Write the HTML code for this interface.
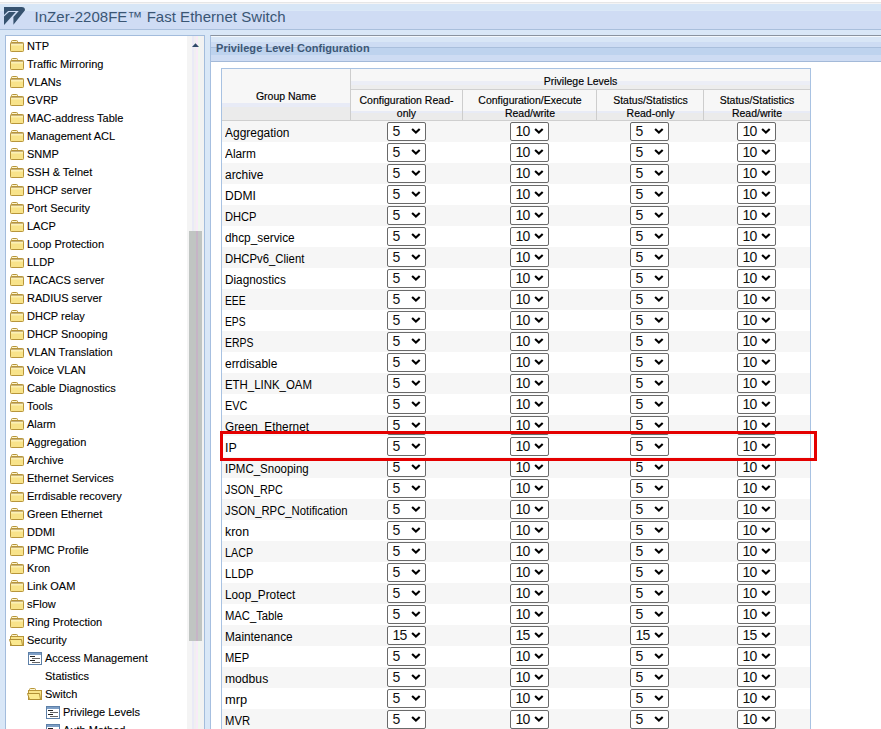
<!DOCTYPE html>
<html><head><meta charset="utf-8"><style>
*{margin:0;padding:0;box-sizing:border-box}
html,body{width:881px;height:729px;overflow:hidden;background:#d9e7f7;font-family:"Liberation Sans",sans-serif;position:relative}
.abs{position:absolute}
#topstrip{position:absolute;left:0;top:0;width:881px;height:4px;background:linear-gradient(#fefefe 0,#fefefe 2px,#e6e6e6 2px,#e6e6e6 3px,#f4f4f4 3px,#f4f4f4 4px)}
#titlebar{position:absolute;left:0;top:4px;width:881px;height:26px;background:linear-gradient(#d7e6f6 0,#d7e6f6 6px,#dae8f7 6px,#dae8f7 7px,#cfdcf4 7px,#cfdcf4 100%);border-bottom:1px solid #a9bfdc}
#title{position:absolute;left:34.5px;top:8px;letter-spacing:0.03px;font-size:15px;color:#3a5674;white-space:nowrap;line-height:18px}
#logo{position:absolute;left:0;top:0}
#side{position:absolute;left:5px;top:35px;width:200px;height:700px;background:#fff;border:1px solid #a3bcdc}
#sb{position:absolute;left:187px;top:36px;width:17px;height:700px;background:linear-gradient(90deg,#f4f4f4 0,#f4f4f4 5px,#eaeaf6 5px,#eaeaf6 7px,#f0f0f0 7px,#f0f0f0 9px,#f8eaf8 9px,#f8eaf8 11px,#eef8ee 11px,#eef8ee 13px,#f2f2f2 13px)}
#thumb{position:absolute;left:189px;top:231px;width:13px;height:410px;background:linear-gradient(90deg,#c0c5c2 0,#c0c5c2 7px,#c6b4c6 7px,#c6b4c6 9px,#c0c5c2 9px)}
.ico{position:absolute;line-height:0}
.si{position:absolute;font-size:11px;line-height:18px;height:18px;color:#000;-webkit-text-stroke:0.1px #000;white-space:nowrap}
#panel{position:absolute;left:210px;top:35px;width:700px;height:700px;background:#fff;border-left:1px solid #a6bfe0;border-top:1px solid #8a939f}
#phead{position:absolute;left:211px;top:36px;width:670px;height:26px;background:linear-gradient(#f3f8fd 0,#f3f8fd 1px,#d8e6f6 1px,#d8e6f6 6px,#cddcf3 6px,#cddcf3 11px,#a9bfdc 11px,#a9bfdc 12px,#bed3ee 12px,#bed3ee 19px,#cedcf3 19px,#cedcf3 25px);border-bottom:1px solid #a3b9d8}
#ptitle{position:absolute;left:216px;top:41px;letter-spacing:0.05px;font-size:11px;font-weight:bold;color:#3d5876;line-height:14px;white-space:nowrap}
#tbl{position:absolute;left:221px;top:68px;width:590px;height:700px;border:1px solid #a8c2e2;background:#fff}
.th{position:absolute;font-size:10.5px;color:#000;-webkit-text-stroke:0.15px #000;text-align:center;line-height:13px}
.hc{position:absolute}
.row{position:absolute;left:222px;width:588px;height:21px}
.nm{position:absolute;transform-origin:0 0;left:3px;top:0;font-size:12px;line-height:21px;padding-top:2px;color:#000;white-space:nowrap}
.sel{position:absolute;top:1px;width:39px;height:19px;border:1px solid #6a6a6a;border-radius:2px;background:#fff}
.sel span{position:absolute;left:4.5px;top:0;font-size:14px;line-height:17px;color:#111;letter-spacing:-0.7px}
.chev{position:absolute;left:23px;top:4px}
#red{position:absolute;left:220px;top:431px;width:597px;height:30px;border:3px solid #e40000}
</style></head><body>
<div id="topstrip"></div>
<div id="titlebar"></div>
<svg id="logo" width="30" height="30" viewBox="0 0 30 30"><path d="M4,7 L21.7,7 Q25,7 25,10.3 L13.4,24.8 L13.4,16.9 L18.8,10.9 L8.1,10.9 L4,15 Z" fill="#36526f"/><path d="M4,16.4 L9,12.1 L15.8,12.1 L4.3,24.8 L4,24.8 Z" fill="#36526f"/></svg>
<div id="title">InZer-2208FE™ Fast Ethernet Switch</div>
<div id="side"></div>
<div class="ico" style="left:10px;top:40px"><svg class="ic" width="15" height="13" viewBox="0 0 15 13"><path d="M1.5,2.5 L1.5,1.5 Q1.5,0.5 2.5,0.5 L6.5,0.5 Q7.5,0.5 7.5,1.5 L7.5,2.5" fill="#fdf6d0" stroke="#b8963a" stroke-width="1"/><rect x="0.5" y="2.5" width="13" height="9" rx="0.8" fill="#f8e38a" stroke="#b8963a" stroke-width="1"/><rect x="1" y="3" width="12" height="1" fill="#c8b27e"/><rect x="1" y="4" width="12" height="1.5" fill="#fcf1b5"/></svg></div><div class="si" style="left:27px;top:37px">NTP</div>
<div class="ico" style="left:10px;top:58px"><svg class="ic" width="15" height="13" viewBox="0 0 15 13"><path d="M1.5,2.5 L1.5,1.5 Q1.5,0.5 2.5,0.5 L6.5,0.5 Q7.5,0.5 7.5,1.5 L7.5,2.5" fill="#fdf6d0" stroke="#b8963a" stroke-width="1"/><rect x="0.5" y="2.5" width="13" height="9" rx="0.8" fill="#f8e38a" stroke="#b8963a" stroke-width="1"/><rect x="1" y="3" width="12" height="1" fill="#c8b27e"/><rect x="1" y="4" width="12" height="1.5" fill="#fcf1b5"/></svg></div><div class="si" style="left:27px;top:55px">Traffic Mirroring</div>
<div class="ico" style="left:10px;top:76px"><svg class="ic" width="15" height="13" viewBox="0 0 15 13"><path d="M1.5,2.5 L1.5,1.5 Q1.5,0.5 2.5,0.5 L6.5,0.5 Q7.5,0.5 7.5,1.5 L7.5,2.5" fill="#fdf6d0" stroke="#b8963a" stroke-width="1"/><rect x="0.5" y="2.5" width="13" height="9" rx="0.8" fill="#f8e38a" stroke="#b8963a" stroke-width="1"/><rect x="1" y="3" width="12" height="1" fill="#c8b27e"/><rect x="1" y="4" width="12" height="1.5" fill="#fcf1b5"/></svg></div><div class="si" style="left:27px;top:73px">VLANs</div>
<div class="ico" style="left:10px;top:94px"><svg class="ic" width="15" height="13" viewBox="0 0 15 13"><path d="M1.5,2.5 L1.5,1.5 Q1.5,0.5 2.5,0.5 L6.5,0.5 Q7.5,0.5 7.5,1.5 L7.5,2.5" fill="#fdf6d0" stroke="#b8963a" stroke-width="1"/><rect x="0.5" y="2.5" width="13" height="9" rx="0.8" fill="#f8e38a" stroke="#b8963a" stroke-width="1"/><rect x="1" y="3" width="12" height="1" fill="#c8b27e"/><rect x="1" y="4" width="12" height="1.5" fill="#fcf1b5"/></svg></div><div class="si" style="left:27px;top:91px">GVRP</div>
<div class="ico" style="left:10px;top:112px"><svg class="ic" width="15" height="13" viewBox="0 0 15 13"><path d="M1.5,2.5 L1.5,1.5 Q1.5,0.5 2.5,0.5 L6.5,0.5 Q7.5,0.5 7.5,1.5 L7.5,2.5" fill="#fdf6d0" stroke="#b8963a" stroke-width="1"/><rect x="0.5" y="2.5" width="13" height="9" rx="0.8" fill="#f8e38a" stroke="#b8963a" stroke-width="1"/><rect x="1" y="3" width="12" height="1" fill="#c8b27e"/><rect x="1" y="4" width="12" height="1.5" fill="#fcf1b5"/></svg></div><div class="si" style="left:27px;top:109px">MAC-address Table</div>
<div class="ico" style="left:10px;top:130px"><svg class="ic" width="15" height="13" viewBox="0 0 15 13"><path d="M1.5,2.5 L1.5,1.5 Q1.5,0.5 2.5,0.5 L6.5,0.5 Q7.5,0.5 7.5,1.5 L7.5,2.5" fill="#fdf6d0" stroke="#b8963a" stroke-width="1"/><rect x="0.5" y="2.5" width="13" height="9" rx="0.8" fill="#f8e38a" stroke="#b8963a" stroke-width="1"/><rect x="1" y="3" width="12" height="1" fill="#c8b27e"/><rect x="1" y="4" width="12" height="1.5" fill="#fcf1b5"/></svg></div><div class="si" style="left:27px;top:127px">Management ACL</div>
<div class="ico" style="left:10px;top:148px"><svg class="ic" width="15" height="13" viewBox="0 0 15 13"><path d="M1.5,2.5 L1.5,1.5 Q1.5,0.5 2.5,0.5 L6.5,0.5 Q7.5,0.5 7.5,1.5 L7.5,2.5" fill="#fdf6d0" stroke="#b8963a" stroke-width="1"/><rect x="0.5" y="2.5" width="13" height="9" rx="0.8" fill="#f8e38a" stroke="#b8963a" stroke-width="1"/><rect x="1" y="3" width="12" height="1" fill="#c8b27e"/><rect x="1" y="4" width="12" height="1.5" fill="#fcf1b5"/></svg></div><div class="si" style="left:27px;top:145px">SNMP</div>
<div class="ico" style="left:10px;top:166px"><svg class="ic" width="15" height="13" viewBox="0 0 15 13"><path d="M1.5,2.5 L1.5,1.5 Q1.5,0.5 2.5,0.5 L6.5,0.5 Q7.5,0.5 7.5,1.5 L7.5,2.5" fill="#fdf6d0" stroke="#b8963a" stroke-width="1"/><rect x="0.5" y="2.5" width="13" height="9" rx="0.8" fill="#f8e38a" stroke="#b8963a" stroke-width="1"/><rect x="1" y="3" width="12" height="1" fill="#c8b27e"/><rect x="1" y="4" width="12" height="1.5" fill="#fcf1b5"/></svg></div><div class="si" style="left:27px;top:163px">SSH &amp; Telnet</div>
<div class="ico" style="left:10px;top:184px"><svg class="ic" width="15" height="13" viewBox="0 0 15 13"><path d="M1.5,2.5 L1.5,1.5 Q1.5,0.5 2.5,0.5 L6.5,0.5 Q7.5,0.5 7.5,1.5 L7.5,2.5" fill="#fdf6d0" stroke="#b8963a" stroke-width="1"/><rect x="0.5" y="2.5" width="13" height="9" rx="0.8" fill="#f8e38a" stroke="#b8963a" stroke-width="1"/><rect x="1" y="3" width="12" height="1" fill="#c8b27e"/><rect x="1" y="4" width="12" height="1.5" fill="#fcf1b5"/></svg></div><div class="si" style="left:27px;top:181px">DHCP server</div>
<div class="ico" style="left:10px;top:202px"><svg class="ic" width="15" height="13" viewBox="0 0 15 13"><path d="M1.5,2.5 L1.5,1.5 Q1.5,0.5 2.5,0.5 L6.5,0.5 Q7.5,0.5 7.5,1.5 L7.5,2.5" fill="#fdf6d0" stroke="#b8963a" stroke-width="1"/><rect x="0.5" y="2.5" width="13" height="9" rx="0.8" fill="#f8e38a" stroke="#b8963a" stroke-width="1"/><rect x="1" y="3" width="12" height="1" fill="#c8b27e"/><rect x="1" y="4" width="12" height="1.5" fill="#fcf1b5"/></svg></div><div class="si" style="left:27px;top:199px">Port Security</div>
<div class="ico" style="left:10px;top:220px"><svg class="ic" width="15" height="13" viewBox="0 0 15 13"><path d="M1.5,2.5 L1.5,1.5 Q1.5,0.5 2.5,0.5 L6.5,0.5 Q7.5,0.5 7.5,1.5 L7.5,2.5" fill="#fdf6d0" stroke="#b8963a" stroke-width="1"/><rect x="0.5" y="2.5" width="13" height="9" rx="0.8" fill="#f8e38a" stroke="#b8963a" stroke-width="1"/><rect x="1" y="3" width="12" height="1" fill="#c8b27e"/><rect x="1" y="4" width="12" height="1.5" fill="#fcf1b5"/></svg></div><div class="si" style="left:27px;top:217px">LACP</div>
<div class="ico" style="left:10px;top:238px"><svg class="ic" width="15" height="13" viewBox="0 0 15 13"><path d="M1.5,2.5 L1.5,1.5 Q1.5,0.5 2.5,0.5 L6.5,0.5 Q7.5,0.5 7.5,1.5 L7.5,2.5" fill="#fdf6d0" stroke="#b8963a" stroke-width="1"/><rect x="0.5" y="2.5" width="13" height="9" rx="0.8" fill="#f8e38a" stroke="#b8963a" stroke-width="1"/><rect x="1" y="3" width="12" height="1" fill="#c8b27e"/><rect x="1" y="4" width="12" height="1.5" fill="#fcf1b5"/></svg></div><div class="si" style="left:27px;top:235px">Loop Protection</div>
<div class="ico" style="left:10px;top:256px"><svg class="ic" width="15" height="13" viewBox="0 0 15 13"><path d="M1.5,2.5 L1.5,1.5 Q1.5,0.5 2.5,0.5 L6.5,0.5 Q7.5,0.5 7.5,1.5 L7.5,2.5" fill="#fdf6d0" stroke="#b8963a" stroke-width="1"/><rect x="0.5" y="2.5" width="13" height="9" rx="0.8" fill="#f8e38a" stroke="#b8963a" stroke-width="1"/><rect x="1" y="3" width="12" height="1" fill="#c8b27e"/><rect x="1" y="4" width="12" height="1.5" fill="#fcf1b5"/></svg></div><div class="si" style="left:27px;top:253px">LLDP</div>
<div class="ico" style="left:10px;top:274px"><svg class="ic" width="15" height="13" viewBox="0 0 15 13"><path d="M1.5,2.5 L1.5,1.5 Q1.5,0.5 2.5,0.5 L6.5,0.5 Q7.5,0.5 7.5,1.5 L7.5,2.5" fill="#fdf6d0" stroke="#b8963a" stroke-width="1"/><rect x="0.5" y="2.5" width="13" height="9" rx="0.8" fill="#f8e38a" stroke="#b8963a" stroke-width="1"/><rect x="1" y="3" width="12" height="1" fill="#c8b27e"/><rect x="1" y="4" width="12" height="1.5" fill="#fcf1b5"/></svg></div><div class="si" style="left:27px;top:271px">TACACS server</div>
<div class="ico" style="left:10px;top:292px"><svg class="ic" width="15" height="13" viewBox="0 0 15 13"><path d="M1.5,2.5 L1.5,1.5 Q1.5,0.5 2.5,0.5 L6.5,0.5 Q7.5,0.5 7.5,1.5 L7.5,2.5" fill="#fdf6d0" stroke="#b8963a" stroke-width="1"/><rect x="0.5" y="2.5" width="13" height="9" rx="0.8" fill="#f8e38a" stroke="#b8963a" stroke-width="1"/><rect x="1" y="3" width="12" height="1" fill="#c8b27e"/><rect x="1" y="4" width="12" height="1.5" fill="#fcf1b5"/></svg></div><div class="si" style="left:27px;top:289px">RADIUS server</div>
<div class="ico" style="left:10px;top:310px"><svg class="ic" width="15" height="13" viewBox="0 0 15 13"><path d="M1.5,2.5 L1.5,1.5 Q1.5,0.5 2.5,0.5 L6.5,0.5 Q7.5,0.5 7.5,1.5 L7.5,2.5" fill="#fdf6d0" stroke="#b8963a" stroke-width="1"/><rect x="0.5" y="2.5" width="13" height="9" rx="0.8" fill="#f8e38a" stroke="#b8963a" stroke-width="1"/><rect x="1" y="3" width="12" height="1" fill="#c8b27e"/><rect x="1" y="4" width="12" height="1.5" fill="#fcf1b5"/></svg></div><div class="si" style="left:27px;top:307px">DHCP relay</div>
<div class="ico" style="left:10px;top:328px"><svg class="ic" width="15" height="13" viewBox="0 0 15 13"><path d="M1.5,2.5 L1.5,1.5 Q1.5,0.5 2.5,0.5 L6.5,0.5 Q7.5,0.5 7.5,1.5 L7.5,2.5" fill="#fdf6d0" stroke="#b8963a" stroke-width="1"/><rect x="0.5" y="2.5" width="13" height="9" rx="0.8" fill="#f8e38a" stroke="#b8963a" stroke-width="1"/><rect x="1" y="3" width="12" height="1" fill="#c8b27e"/><rect x="1" y="4" width="12" height="1.5" fill="#fcf1b5"/></svg></div><div class="si" style="left:27px;top:325px">DHCP Snooping</div>
<div class="ico" style="left:10px;top:346px"><svg class="ic" width="15" height="13" viewBox="0 0 15 13"><path d="M1.5,2.5 L1.5,1.5 Q1.5,0.5 2.5,0.5 L6.5,0.5 Q7.5,0.5 7.5,1.5 L7.5,2.5" fill="#fdf6d0" stroke="#b8963a" stroke-width="1"/><rect x="0.5" y="2.5" width="13" height="9" rx="0.8" fill="#f8e38a" stroke="#b8963a" stroke-width="1"/><rect x="1" y="3" width="12" height="1" fill="#c8b27e"/><rect x="1" y="4" width="12" height="1.5" fill="#fcf1b5"/></svg></div><div class="si" style="left:27px;top:343px">VLAN Translation</div>
<div class="ico" style="left:10px;top:364px"><svg class="ic" width="15" height="13" viewBox="0 0 15 13"><path d="M1.5,2.5 L1.5,1.5 Q1.5,0.5 2.5,0.5 L6.5,0.5 Q7.5,0.5 7.5,1.5 L7.5,2.5" fill="#fdf6d0" stroke="#b8963a" stroke-width="1"/><rect x="0.5" y="2.5" width="13" height="9" rx="0.8" fill="#f8e38a" stroke="#b8963a" stroke-width="1"/><rect x="1" y="3" width="12" height="1" fill="#c8b27e"/><rect x="1" y="4" width="12" height="1.5" fill="#fcf1b5"/></svg></div><div class="si" style="left:27px;top:361px">Voice VLAN</div>
<div class="ico" style="left:10px;top:382px"><svg class="ic" width="15" height="13" viewBox="0 0 15 13"><path d="M1.5,2.5 L1.5,1.5 Q1.5,0.5 2.5,0.5 L6.5,0.5 Q7.5,0.5 7.5,1.5 L7.5,2.5" fill="#fdf6d0" stroke="#b8963a" stroke-width="1"/><rect x="0.5" y="2.5" width="13" height="9" rx="0.8" fill="#f8e38a" stroke="#b8963a" stroke-width="1"/><rect x="1" y="3" width="12" height="1" fill="#c8b27e"/><rect x="1" y="4" width="12" height="1.5" fill="#fcf1b5"/></svg></div><div class="si" style="left:27px;top:379px">Cable Diagnostics</div>
<div class="ico" style="left:10px;top:400px"><svg class="ic" width="15" height="13" viewBox="0 0 15 13"><path d="M1.5,2.5 L1.5,1.5 Q1.5,0.5 2.5,0.5 L6.5,0.5 Q7.5,0.5 7.5,1.5 L7.5,2.5" fill="#fdf6d0" stroke="#b8963a" stroke-width="1"/><rect x="0.5" y="2.5" width="13" height="9" rx="0.8" fill="#f8e38a" stroke="#b8963a" stroke-width="1"/><rect x="1" y="3" width="12" height="1" fill="#c8b27e"/><rect x="1" y="4" width="12" height="1.5" fill="#fcf1b5"/></svg></div><div class="si" style="left:27px;top:397px">Tools</div>
<div class="ico" style="left:10px;top:418px"><svg class="ic" width="15" height="13" viewBox="0 0 15 13"><path d="M1.5,2.5 L1.5,1.5 Q1.5,0.5 2.5,0.5 L6.5,0.5 Q7.5,0.5 7.5,1.5 L7.5,2.5" fill="#fdf6d0" stroke="#b8963a" stroke-width="1"/><rect x="0.5" y="2.5" width="13" height="9" rx="0.8" fill="#f8e38a" stroke="#b8963a" stroke-width="1"/><rect x="1" y="3" width="12" height="1" fill="#c8b27e"/><rect x="1" y="4" width="12" height="1.5" fill="#fcf1b5"/></svg></div><div class="si" style="left:27px;top:415px">Alarm</div>
<div class="ico" style="left:10px;top:436px"><svg class="ic" width="15" height="13" viewBox="0 0 15 13"><path d="M1.5,2.5 L1.5,1.5 Q1.5,0.5 2.5,0.5 L6.5,0.5 Q7.5,0.5 7.5,1.5 L7.5,2.5" fill="#fdf6d0" stroke="#b8963a" stroke-width="1"/><rect x="0.5" y="2.5" width="13" height="9" rx="0.8" fill="#f8e38a" stroke="#b8963a" stroke-width="1"/><rect x="1" y="3" width="12" height="1" fill="#c8b27e"/><rect x="1" y="4" width="12" height="1.5" fill="#fcf1b5"/></svg></div><div class="si" style="left:27px;top:433px">Aggregation</div>
<div class="ico" style="left:10px;top:454px"><svg class="ic" width="15" height="13" viewBox="0 0 15 13"><path d="M1.5,2.5 L1.5,1.5 Q1.5,0.5 2.5,0.5 L6.5,0.5 Q7.5,0.5 7.5,1.5 L7.5,2.5" fill="#fdf6d0" stroke="#b8963a" stroke-width="1"/><rect x="0.5" y="2.5" width="13" height="9" rx="0.8" fill="#f8e38a" stroke="#b8963a" stroke-width="1"/><rect x="1" y="3" width="12" height="1" fill="#c8b27e"/><rect x="1" y="4" width="12" height="1.5" fill="#fcf1b5"/></svg></div><div class="si" style="left:27px;top:451px">Archive</div>
<div class="ico" style="left:10px;top:472px"><svg class="ic" width="15" height="13" viewBox="0 0 15 13"><path d="M1.5,2.5 L1.5,1.5 Q1.5,0.5 2.5,0.5 L6.5,0.5 Q7.5,0.5 7.5,1.5 L7.5,2.5" fill="#fdf6d0" stroke="#b8963a" stroke-width="1"/><rect x="0.5" y="2.5" width="13" height="9" rx="0.8" fill="#f8e38a" stroke="#b8963a" stroke-width="1"/><rect x="1" y="3" width="12" height="1" fill="#c8b27e"/><rect x="1" y="4" width="12" height="1.5" fill="#fcf1b5"/></svg></div><div class="si" style="left:27px;top:469px">Ethernet Services</div>
<div class="ico" style="left:10px;top:490px"><svg class="ic" width="15" height="13" viewBox="0 0 15 13"><path d="M1.5,2.5 L1.5,1.5 Q1.5,0.5 2.5,0.5 L6.5,0.5 Q7.5,0.5 7.5,1.5 L7.5,2.5" fill="#fdf6d0" stroke="#b8963a" stroke-width="1"/><rect x="0.5" y="2.5" width="13" height="9" rx="0.8" fill="#f8e38a" stroke="#b8963a" stroke-width="1"/><rect x="1" y="3" width="12" height="1" fill="#c8b27e"/><rect x="1" y="4" width="12" height="1.5" fill="#fcf1b5"/></svg></div><div class="si" style="left:27px;top:487px">Errdisable recovery</div>
<div class="ico" style="left:10px;top:508px"><svg class="ic" width="15" height="13" viewBox="0 0 15 13"><path d="M1.5,2.5 L1.5,1.5 Q1.5,0.5 2.5,0.5 L6.5,0.5 Q7.5,0.5 7.5,1.5 L7.5,2.5" fill="#fdf6d0" stroke="#b8963a" stroke-width="1"/><rect x="0.5" y="2.5" width="13" height="9" rx="0.8" fill="#f8e38a" stroke="#b8963a" stroke-width="1"/><rect x="1" y="3" width="12" height="1" fill="#c8b27e"/><rect x="1" y="4" width="12" height="1.5" fill="#fcf1b5"/></svg></div><div class="si" style="left:27px;top:505px">Green Ethernet</div>
<div class="ico" style="left:10px;top:526px"><svg class="ic" width="15" height="13" viewBox="0 0 15 13"><path d="M1.5,2.5 L1.5,1.5 Q1.5,0.5 2.5,0.5 L6.5,0.5 Q7.5,0.5 7.5,1.5 L7.5,2.5" fill="#fdf6d0" stroke="#b8963a" stroke-width="1"/><rect x="0.5" y="2.5" width="13" height="9" rx="0.8" fill="#f8e38a" stroke="#b8963a" stroke-width="1"/><rect x="1" y="3" width="12" height="1" fill="#c8b27e"/><rect x="1" y="4" width="12" height="1.5" fill="#fcf1b5"/></svg></div><div class="si" style="left:27px;top:523px">DDMI</div>
<div class="ico" style="left:10px;top:544px"><svg class="ic" width="15" height="13" viewBox="0 0 15 13"><path d="M1.5,2.5 L1.5,1.5 Q1.5,0.5 2.5,0.5 L6.5,0.5 Q7.5,0.5 7.5,1.5 L7.5,2.5" fill="#fdf6d0" stroke="#b8963a" stroke-width="1"/><rect x="0.5" y="2.5" width="13" height="9" rx="0.8" fill="#f8e38a" stroke="#b8963a" stroke-width="1"/><rect x="1" y="3" width="12" height="1" fill="#c8b27e"/><rect x="1" y="4" width="12" height="1.5" fill="#fcf1b5"/></svg></div><div class="si" style="left:27px;top:541px">IPMC Profile</div>
<div class="ico" style="left:10px;top:562px"><svg class="ic" width="15" height="13" viewBox="0 0 15 13"><path d="M1.5,2.5 L1.5,1.5 Q1.5,0.5 2.5,0.5 L6.5,0.5 Q7.5,0.5 7.5,1.5 L7.5,2.5" fill="#fdf6d0" stroke="#b8963a" stroke-width="1"/><rect x="0.5" y="2.5" width="13" height="9" rx="0.8" fill="#f8e38a" stroke="#b8963a" stroke-width="1"/><rect x="1" y="3" width="12" height="1" fill="#c8b27e"/><rect x="1" y="4" width="12" height="1.5" fill="#fcf1b5"/></svg></div><div class="si" style="left:27px;top:559px">Kron</div>
<div class="ico" style="left:10px;top:580px"><svg class="ic" width="15" height="13" viewBox="0 0 15 13"><path d="M1.5,2.5 L1.5,1.5 Q1.5,0.5 2.5,0.5 L6.5,0.5 Q7.5,0.5 7.5,1.5 L7.5,2.5" fill="#fdf6d0" stroke="#b8963a" stroke-width="1"/><rect x="0.5" y="2.5" width="13" height="9" rx="0.8" fill="#f8e38a" stroke="#b8963a" stroke-width="1"/><rect x="1" y="3" width="12" height="1" fill="#c8b27e"/><rect x="1" y="4" width="12" height="1.5" fill="#fcf1b5"/></svg></div><div class="si" style="left:27px;top:577px">Link OAM</div>
<div class="ico" style="left:10px;top:598px"><svg class="ic" width="15" height="13" viewBox="0 0 15 13"><path d="M1.5,2.5 L1.5,1.5 Q1.5,0.5 2.5,0.5 L6.5,0.5 Q7.5,0.5 7.5,1.5 L7.5,2.5" fill="#fdf6d0" stroke="#b8963a" stroke-width="1"/><rect x="0.5" y="2.5" width="13" height="9" rx="0.8" fill="#f8e38a" stroke="#b8963a" stroke-width="1"/><rect x="1" y="3" width="12" height="1" fill="#c8b27e"/><rect x="1" y="4" width="12" height="1.5" fill="#fcf1b5"/></svg></div><div class="si" style="left:27px;top:595px">sFlow</div>
<div class="ico" style="left:10px;top:616px"><svg class="ic" width="15" height="13" viewBox="0 0 15 13"><path d="M1.5,2.5 L1.5,1.5 Q1.5,0.5 2.5,0.5 L6.5,0.5 Q7.5,0.5 7.5,1.5 L7.5,2.5" fill="#fdf6d0" stroke="#b8963a" stroke-width="1"/><rect x="0.5" y="2.5" width="13" height="9" rx="0.8" fill="#f8e38a" stroke="#b8963a" stroke-width="1"/><rect x="1" y="3" width="12" height="1" fill="#c8b27e"/><rect x="1" y="4" width="12" height="1.5" fill="#fcf1b5"/></svg></div><div class="si" style="left:27px;top:613px">Ring Protection</div>
<div class="ico" style="left:9px;top:634px"><svg class="ic" width="17" height="14" viewBox="0 0 17 14"><path d="M2.5,2.5 V1.5 Q2.5,0.5 3.5,0.5 H7.5 Q8.5,0.5 8.5,1.5 V2.5" fill="#fdf6d0" stroke="#b8963a" stroke-width="1"/><rect x="1.5" y="2.5" width="13" height="9" fill="#f8e38a" stroke="#b8963a" stroke-width="1"/><path d="M0.5,5.5 H12.5 L13.5,11.5 H2.5 Z" fill="#fbe98f" stroke="#b08f35" stroke-width="1"/></svg></div><div class="si" style="left:27px;top:631px">Security</div>
<div class="ico" style="left:28px;top:652px"><svg class="ic" width="14" height="13" viewBox="0 0 14 13"><rect x="0.5" y="0.5" width="13" height="12" fill="#fff" stroke="#5d80a8"/><rect x="1" y="1" width="12" height="2" fill="#7e9fc6"/><path d="M2,4.5 H7 M2,8.5 H7" stroke="#222" stroke-width="1"/><path d="M4,6.5 H12 M4,10.5 H12" stroke="#666" stroke-width="1"/></svg></div><div class="si" style="left:45px;top:649px">Access Management</div>
<div class="si" style="left:45px;top:667px">Statistics</div>
<div class="ico" style="left:27px;top:688px"><svg class="ic" width="17" height="14" viewBox="0 0 17 14"><path d="M2.5,2.5 V1.5 Q2.5,0.5 3.5,0.5 H7.5 Q8.5,0.5 8.5,1.5 V2.5" fill="#fdf6d0" stroke="#b8963a" stroke-width="1"/><rect x="1.5" y="2.5" width="13" height="9" fill="#f8e38a" stroke="#b8963a" stroke-width="1"/><path d="M0.5,5.5 H12.5 L13.5,11.5 H2.5 Z" fill="#fbe98f" stroke="#b08f35" stroke-width="1"/></svg></div><div class="si" style="left:45px;top:685px">Switch</div>
<div class="ico" style="left:46px;top:706px"><svg class="ic" width="14" height="13" viewBox="0 0 14 13"><rect x="0.5" y="0.5" width="13" height="12" fill="#fff" stroke="#5d80a8"/><rect x="1" y="1" width="12" height="2" fill="#7e9fc6"/><path d="M2,4.5 H7 M2,8.5 H7" stroke="#222" stroke-width="1"/><path d="M4,6.5 H12 M4,10.5 H12" stroke="#666" stroke-width="1"/></svg></div><div class="si" style="left:63px;top:703px">Privilege Levels</div>
<div class="ico" style="left:46px;top:724px"><svg class="ic" width="14" height="13" viewBox="0 0 14 13"><rect x="0.5" y="0.5" width="13" height="12" fill="#fff" stroke="#5d80a8"/><rect x="1" y="1" width="12" height="2" fill="#7e9fc6"/><path d="M2,4.5 H7 M2,8.5 H7" stroke="#222" stroke-width="1"/><path d="M4,6.5 H12 M4,10.5 H12" stroke="#666" stroke-width="1"/></svg></div><div class="si" style="left:63px;top:721px">Auth Method</div>
<div id="sb"></div>
<div id="thumb"></div>
<svg class="abs" style="left:191px;top:42px" width="10" height="6" viewBox="0 0 10 6"><path d="M1,5 L4.5,1.2 L8,5 Z" fill="#2f4a68"/></svg>
<div id="panel"></div>
<div id="phead"></div>
<div id="ptitle">Privilege Level Configuration</div>
<div id="tbl"></div>
<div class="hc" style="left:222px;top:69px;width:128px;height:51px;background:linear-gradient(#f7f7f7 0,#f7f7f7 34px,#e8ebf6 34px,#e8ebf6 38px,#ebebeb 38px,#ebebeb 51px)"></div>
<div class="hc" style="left:351px;top:69px;width:459px;height:20px;background:linear-gradient(#f7f7f7 0,#f7f7f7 12px,#eceef6 12px,#eceef6 16px,#ededed 16px,#ededed 20px)"></div>
<div class="hc" style="left:351px;top:89px;width:459px;height:1px;background:#d0d0d0"></div>
<div class="hc" style="left:222px;top:120px;width:588px;height:1px;background:#cfcfcf"></div>
<div class="hc" style="left:350px;top:69px;width:1px;height:51px;background:#cdcdcd"></div>
<div class="hc" style="left:351px;top:90px;width:459px;height:30px;background:linear-gradient(#f7f7f7 0,#f7f7f7 21px,#e8ebf6 21px,#e8ebf6 23px,#ebebeb 23px,#ebebeb 30px)"></div>
<div class="hc" style="left:462px;top:90px;width:1px;height:30px;background:#cdcdcd"></div>
<div class="hc" style="left:596px;top:90px;width:1px;height:30px;background:#cdcdcd"></div>
<div class="hc" style="left:703px;top:90px;width:1px;height:30px;background:#cdcdcd"></div>
<div class="th" style="left:222px;top:90px;width:128px">Group Name</div>
<div class="th" style="left:351px;top:75px;width:459px">Privilege Levels</div>
<div class="th" style="left:351px;top:94px;width:111px">Configuration Read-<br>only</div>
<div class="th" style="left:463px;top:94px;width:134px">Configuration/Execute<br>Read/write</div>
<div class="th" style="left:598px;top:94px;width:105px">Status/Statistics<br>Read-only</div>
<div class="th" style="left:704px;top:94px;width:106px">Status/Statistics<br>Read/write</div>
<div class="row" style="top:121px;background:#f6f6f6"><div class="nm" style="transform:scaleX(0.9969)">Aggregation</div><div class="sel" style="left:165px"><span>5</span><svg class="chev" width="10" height="8" viewBox="0 0 10 8"><path d="M1.1,2 L4.9,5.6 L8.7,2" fill="none" stroke="#000" stroke-width="2.1"/></svg></div><div class="sel" style="left:288px"><span>10</span><svg class="chev" width="10" height="8" viewBox="0 0 10 8"><path d="M1.1,2 L4.9,5.6 L8.7,2" fill="none" stroke="#000" stroke-width="2.1"/></svg></div><div class="sel" style="left:408px"><span>5</span><svg class="chev" width="10" height="8" viewBox="0 0 10 8"><path d="M1.1,2 L4.9,5.6 L8.7,2" fill="none" stroke="#000" stroke-width="2.1"/></svg></div><div class="sel" style="left:515px"><span>10</span><svg class="chev" width="10" height="8" viewBox="0 0 10 8"><path d="M1.1,2 L4.9,5.6 L8.7,2" fill="none" stroke="#000" stroke-width="2.1"/></svg></div></div>
<div class="row" style="top:142px;background:#ffffff"><div class="nm" style="transform:scaleX(0.9871)">Alarm</div><div class="sel" style="left:165px"><span>5</span><svg class="chev" width="10" height="8" viewBox="0 0 10 8"><path d="M1.1,2 L4.9,5.6 L8.7,2" fill="none" stroke="#000" stroke-width="2.1"/></svg></div><div class="sel" style="left:288px"><span>10</span><svg class="chev" width="10" height="8" viewBox="0 0 10 8"><path d="M1.1,2 L4.9,5.6 L8.7,2" fill="none" stroke="#000" stroke-width="2.1"/></svg></div><div class="sel" style="left:408px"><span>5</span><svg class="chev" width="10" height="8" viewBox="0 0 10 8"><path d="M1.1,2 L4.9,5.6 L8.7,2" fill="none" stroke="#000" stroke-width="2.1"/></svg></div><div class="sel" style="left:515px"><span>10</span><svg class="chev" width="10" height="8" viewBox="0 0 10 8"><path d="M1.1,2 L4.9,5.6 L8.7,2" fill="none" stroke="#000" stroke-width="2.1"/></svg></div></div>
<div class="row" style="top:163px;background:#f6f6f6"><div class="nm" style="transform:scaleX(0.9947)">archive</div><div class="sel" style="left:165px"><span>5</span><svg class="chev" width="10" height="8" viewBox="0 0 10 8"><path d="M1.1,2 L4.9,5.6 L8.7,2" fill="none" stroke="#000" stroke-width="2.1"/></svg></div><div class="sel" style="left:288px"><span>10</span><svg class="chev" width="10" height="8" viewBox="0 0 10 8"><path d="M1.1,2 L4.9,5.6 L8.7,2" fill="none" stroke="#000" stroke-width="2.1"/></svg></div><div class="sel" style="left:408px"><span>5</span><svg class="chev" width="10" height="8" viewBox="0 0 10 8"><path d="M1.1,2 L4.9,5.6 L8.7,2" fill="none" stroke="#000" stroke-width="2.1"/></svg></div><div class="sel" style="left:515px"><span>10</span><svg class="chev" width="10" height="8" viewBox="0 0 10 8"><path d="M1.1,2 L4.9,5.6 L8.7,2" fill="none" stroke="#000" stroke-width="2.1"/></svg></div></div>
<div class="row" style="top:184px;background:#ffffff"><div class="nm" style="transform:scaleX(1.0033)">DDMI</div><div class="sel" style="left:165px"><span>5</span><svg class="chev" width="10" height="8" viewBox="0 0 10 8"><path d="M1.1,2 L4.9,5.6 L8.7,2" fill="none" stroke="#000" stroke-width="2.1"/></svg></div><div class="sel" style="left:288px"><span>10</span><svg class="chev" width="10" height="8" viewBox="0 0 10 8"><path d="M1.1,2 L4.9,5.6 L8.7,2" fill="none" stroke="#000" stroke-width="2.1"/></svg></div><div class="sel" style="left:408px"><span>5</span><svg class="chev" width="10" height="8" viewBox="0 0 10 8"><path d="M1.1,2 L4.9,5.6 L8.7,2" fill="none" stroke="#000" stroke-width="2.1"/></svg></div><div class="sel" style="left:515px"><span>10</span><svg class="chev" width="10" height="8" viewBox="0 0 10 8"><path d="M1.1,2 L4.9,5.6 L8.7,2" fill="none" stroke="#000" stroke-width="2.1"/></svg></div></div>
<div class="row" style="top:205px;background:#f6f6f6"><div class="nm" style="transform:scaleX(0.9273)">DHCP</div><div class="sel" style="left:165px"><span>5</span><svg class="chev" width="10" height="8" viewBox="0 0 10 8"><path d="M1.1,2 L4.9,5.6 L8.7,2" fill="none" stroke="#000" stroke-width="2.1"/></svg></div><div class="sel" style="left:288px"><span>10</span><svg class="chev" width="10" height="8" viewBox="0 0 10 8"><path d="M1.1,2 L4.9,5.6 L8.7,2" fill="none" stroke="#000" stroke-width="2.1"/></svg></div><div class="sel" style="left:408px"><span>5</span><svg class="chev" width="10" height="8" viewBox="0 0 10 8"><path d="M1.1,2 L4.9,5.6 L8.7,2" fill="none" stroke="#000" stroke-width="2.1"/></svg></div><div class="sel" style="left:515px"><span>10</span><svg class="chev" width="10" height="8" viewBox="0 0 10 8"><path d="M1.1,2 L4.9,5.6 L8.7,2" fill="none" stroke="#000" stroke-width="2.1"/></svg></div></div>
<div class="row" style="top:226px;background:#ffffff"><div class="nm" style="transform:scaleX(0.9857)">dhcp_service</div><div class="sel" style="left:165px"><span>5</span><svg class="chev" width="10" height="8" viewBox="0 0 10 8"><path d="M1.1,2 L4.9,5.6 L8.7,2" fill="none" stroke="#000" stroke-width="2.1"/></svg></div><div class="sel" style="left:288px"><span>10</span><svg class="chev" width="10" height="8" viewBox="0 0 10 8"><path d="M1.1,2 L4.9,5.6 L8.7,2" fill="none" stroke="#000" stroke-width="2.1"/></svg></div><div class="sel" style="left:408px"><span>5</span><svg class="chev" width="10" height="8" viewBox="0 0 10 8"><path d="M1.1,2 L4.9,5.6 L8.7,2" fill="none" stroke="#000" stroke-width="2.1"/></svg></div><div class="sel" style="left:515px"><span>10</span><svg class="chev" width="10" height="8" viewBox="0 0 10 8"><path d="M1.1,2 L4.9,5.6 L8.7,2" fill="none" stroke="#000" stroke-width="2.1"/></svg></div></div>
<div class="row" style="top:247px;background:#f6f6f6"><div class="nm" style="transform:scaleX(0.944)">DHCPv6_Client</div><div class="sel" style="left:165px"><span>5</span><svg class="chev" width="10" height="8" viewBox="0 0 10 8"><path d="M1.1,2 L4.9,5.6 L8.7,2" fill="none" stroke="#000" stroke-width="2.1"/></svg></div><div class="sel" style="left:288px"><span>10</span><svg class="chev" width="10" height="8" viewBox="0 0 10 8"><path d="M1.1,2 L4.9,5.6 L8.7,2" fill="none" stroke="#000" stroke-width="2.1"/></svg></div><div class="sel" style="left:408px"><span>5</span><svg class="chev" width="10" height="8" viewBox="0 0 10 8"><path d="M1.1,2 L4.9,5.6 L8.7,2" fill="none" stroke="#000" stroke-width="2.1"/></svg></div><div class="sel" style="left:515px"><span>10</span><svg class="chev" width="10" height="8" viewBox="0 0 10 8"><path d="M1.1,2 L4.9,5.6 L8.7,2" fill="none" stroke="#000" stroke-width="2.1"/></svg></div></div>
<div class="row" style="top:268px;background:#ffffff"><div class="nm" style="transform:scaleX(0.9806)">Diagnostics</div><div class="sel" style="left:165px"><span>5</span><svg class="chev" width="10" height="8" viewBox="0 0 10 8"><path d="M1.1,2 L4.9,5.6 L8.7,2" fill="none" stroke="#000" stroke-width="2.1"/></svg></div><div class="sel" style="left:288px"><span>10</span><svg class="chev" width="10" height="8" viewBox="0 0 10 8"><path d="M1.1,2 L4.9,5.6 L8.7,2" fill="none" stroke="#000" stroke-width="2.1"/></svg></div><div class="sel" style="left:408px"><span>5</span><svg class="chev" width="10" height="8" viewBox="0 0 10 8"><path d="M1.1,2 L4.9,5.6 L8.7,2" fill="none" stroke="#000" stroke-width="2.1"/></svg></div><div class="sel" style="left:515px"><span>10</span><svg class="chev" width="10" height="8" viewBox="0 0 10 8"><path d="M1.1,2 L4.9,5.6 L8.7,2" fill="none" stroke="#000" stroke-width="2.1"/></svg></div></div>
<div class="row" style="top:289px;background:#f6f6f6"><div class="nm" style="transform:scaleX(0.8583)">EEE</div><div class="sel" style="left:165px"><span>5</span><svg class="chev" width="10" height="8" viewBox="0 0 10 8"><path d="M1.1,2 L4.9,5.6 L8.7,2" fill="none" stroke="#000" stroke-width="2.1"/></svg></div><div class="sel" style="left:288px"><span>10</span><svg class="chev" width="10" height="8" viewBox="0 0 10 8"><path d="M1.1,2 L4.9,5.6 L8.7,2" fill="none" stroke="#000" stroke-width="2.1"/></svg></div><div class="sel" style="left:408px"><span>5</span><svg class="chev" width="10" height="8" viewBox="0 0 10 8"><path d="M1.1,2 L4.9,5.6 L8.7,2" fill="none" stroke="#000" stroke-width="2.1"/></svg></div><div class="sel" style="left:515px"><span>10</span><svg class="chev" width="10" height="8" viewBox="0 0 10 8"><path d="M1.1,2 L4.9,5.6 L8.7,2" fill="none" stroke="#000" stroke-width="2.1"/></svg></div></div>
<div class="row" style="top:310px;background:#ffffff"><div class="nm" style="transform:scaleX(0.8583)">EPS</div><div class="sel" style="left:165px"><span>5</span><svg class="chev" width="10" height="8" viewBox="0 0 10 8"><path d="M1.1,2 L4.9,5.6 L8.7,2" fill="none" stroke="#000" stroke-width="2.1"/></svg></div><div class="sel" style="left:288px"><span>10</span><svg class="chev" width="10" height="8" viewBox="0 0 10 8"><path d="M1.1,2 L4.9,5.6 L8.7,2" fill="none" stroke="#000" stroke-width="2.1"/></svg></div><div class="sel" style="left:408px"><span>5</span><svg class="chev" width="10" height="8" viewBox="0 0 10 8"><path d="M1.1,2 L4.9,5.6 L8.7,2" fill="none" stroke="#000" stroke-width="2.1"/></svg></div><div class="sel" style="left:515px"><span>10</span><svg class="chev" width="10" height="8" viewBox="0 0 10 8"><path d="M1.1,2 L4.9,5.6 L8.7,2" fill="none" stroke="#000" stroke-width="2.1"/></svg></div></div>
<div class="row" style="top:331px;background:#f6f6f6"><div class="nm" style="transform:scaleX(0.8688)">ERPS</div><div class="sel" style="left:165px"><span>5</span><svg class="chev" width="10" height="8" viewBox="0 0 10 8"><path d="M1.1,2 L4.9,5.6 L8.7,2" fill="none" stroke="#000" stroke-width="2.1"/></svg></div><div class="sel" style="left:288px"><span>10</span><svg class="chev" width="10" height="8" viewBox="0 0 10 8"><path d="M1.1,2 L4.9,5.6 L8.7,2" fill="none" stroke="#000" stroke-width="2.1"/></svg></div><div class="sel" style="left:408px"><span>5</span><svg class="chev" width="10" height="8" viewBox="0 0 10 8"><path d="M1.1,2 L4.9,5.6 L8.7,2" fill="none" stroke="#000" stroke-width="2.1"/></svg></div><div class="sel" style="left:515px"><span>10</span><svg class="chev" width="10" height="8" viewBox="0 0 10 8"><path d="M1.1,2 L4.9,5.6 L8.7,2" fill="none" stroke="#000" stroke-width="2.1"/></svg></div></div>
<div class="row" style="top:352px;background:#ffffff"><div class="nm" style="transform:scaleX(0.9942)">errdisable</div><div class="sel" style="left:165px"><span>5</span><svg class="chev" width="10" height="8" viewBox="0 0 10 8"><path d="M1.1,2 L4.9,5.6 L8.7,2" fill="none" stroke="#000" stroke-width="2.1"/></svg></div><div class="sel" style="left:288px"><span>10</span><svg class="chev" width="10" height="8" viewBox="0 0 10 8"><path d="M1.1,2 L4.9,5.6 L8.7,2" fill="none" stroke="#000" stroke-width="2.1"/></svg></div><div class="sel" style="left:408px"><span>5</span><svg class="chev" width="10" height="8" viewBox="0 0 10 8"><path d="M1.1,2 L4.9,5.6 L8.7,2" fill="none" stroke="#000" stroke-width="2.1"/></svg></div><div class="sel" style="left:515px"><span>10</span><svg class="chev" width="10" height="8" viewBox="0 0 10 8"><path d="M1.1,2 L4.9,5.6 L8.7,2" fill="none" stroke="#000" stroke-width="2.1"/></svg></div></div>
<div class="row" style="top:373px;background:#f6f6f6"><div class="nm" style="transform:scaleX(0.9522)">ETH_LINK_OAM</div><div class="sel" style="left:165px"><span>5</span><svg class="chev" width="10" height="8" viewBox="0 0 10 8"><path d="M1.1,2 L4.9,5.6 L8.7,2" fill="none" stroke="#000" stroke-width="2.1"/></svg></div><div class="sel" style="left:288px"><span>10</span><svg class="chev" width="10" height="8" viewBox="0 0 10 8"><path d="M1.1,2 L4.9,5.6 L8.7,2" fill="none" stroke="#000" stroke-width="2.1"/></svg></div><div class="sel" style="left:408px"><span>5</span><svg class="chev" width="10" height="8" viewBox="0 0 10 8"><path d="M1.1,2 L4.9,5.6 L8.7,2" fill="none" stroke="#000" stroke-width="2.1"/></svg></div><div class="sel" style="left:515px"><span>10</span><svg class="chev" width="10" height="8" viewBox="0 0 10 8"><path d="M1.1,2 L4.9,5.6 L8.7,2" fill="none" stroke="#000" stroke-width="2.1"/></svg></div></div>
<div class="row" style="top:394px;background:#ffffff"><div class="nm" style="transform:scaleX(0.9083)">EVC</div><div class="sel" style="left:165px"><span>5</span><svg class="chev" width="10" height="8" viewBox="0 0 10 8"><path d="M1.1,2 L4.9,5.6 L8.7,2" fill="none" stroke="#000" stroke-width="2.1"/></svg></div><div class="sel" style="left:288px"><span>10</span><svg class="chev" width="10" height="8" viewBox="0 0 10 8"><path d="M1.1,2 L4.9,5.6 L8.7,2" fill="none" stroke="#000" stroke-width="2.1"/></svg></div><div class="sel" style="left:408px"><span>5</span><svg class="chev" width="10" height="8" viewBox="0 0 10 8"><path d="M1.1,2 L4.9,5.6 L8.7,2" fill="none" stroke="#000" stroke-width="2.1"/></svg></div><div class="sel" style="left:515px"><span>10</span><svg class="chev" width="10" height="8" viewBox="0 0 10 8"><path d="M1.1,2 L4.9,5.6 L8.7,2" fill="none" stroke="#000" stroke-width="2.1"/></svg></div></div>
<div class="row" style="top:415px;background:#f6f6f6"><div class="nm" style="transform:scaleX(0.9835)">Green_Ethernet</div><div class="sel" style="left:165px"><span>5</span><svg class="chev" width="10" height="8" viewBox="0 0 10 8"><path d="M1.1,2 L4.9,5.6 L8.7,2" fill="none" stroke="#000" stroke-width="2.1"/></svg></div><div class="sel" style="left:288px"><span>10</span><svg class="chev" width="10" height="8" viewBox="0 0 10 8"><path d="M1.1,2 L4.9,5.6 L8.7,2" fill="none" stroke="#000" stroke-width="2.1"/></svg></div><div class="sel" style="left:408px"><span>5</span><svg class="chev" width="10" height="8" viewBox="0 0 10 8"><path d="M1.1,2 L4.9,5.6 L8.7,2" fill="none" stroke="#000" stroke-width="2.1"/></svg></div><div class="sel" style="left:515px"><span>10</span><svg class="chev" width="10" height="8" viewBox="0 0 10 8"><path d="M1.1,2 L4.9,5.6 L8.7,2" fill="none" stroke="#000" stroke-width="2.1"/></svg></div></div>
<div class="row" style="top:436px;background:#ffffff"><div class="nm" style="transform:scaleX(1.0364)">IP</div><div class="sel" style="left:165px"><span>5</span><svg class="chev" width="10" height="8" viewBox="0 0 10 8"><path d="M1.1,2 L4.9,5.6 L8.7,2" fill="none" stroke="#000" stroke-width="2.1"/></svg></div><div class="sel" style="left:288px"><span>10</span><svg class="chev" width="10" height="8" viewBox="0 0 10 8"><path d="M1.1,2 L4.9,5.6 L8.7,2" fill="none" stroke="#000" stroke-width="2.1"/></svg></div><div class="sel" style="left:408px"><span>5</span><svg class="chev" width="10" height="8" viewBox="0 0 10 8"><path d="M1.1,2 L4.9,5.6 L8.7,2" fill="none" stroke="#000" stroke-width="2.1"/></svg></div><div class="sel" style="left:515px"><span>10</span><svg class="chev" width="10" height="8" viewBox="0 0 10 8"><path d="M1.1,2 L4.9,5.6 L8.7,2" fill="none" stroke="#000" stroke-width="2.1"/></svg></div></div>
<div class="row" style="top:457px;background:#f6f6f6"><div class="nm" style="transform:scaleX(0.9575)">IPMC_Snooping</div><div class="sel" style="left:165px"><span>5</span><svg class="chev" width="10" height="8" viewBox="0 0 10 8"><path d="M1.1,2 L4.9,5.6 L8.7,2" fill="none" stroke="#000" stroke-width="2.1"/></svg></div><div class="sel" style="left:288px"><span>10</span><svg class="chev" width="10" height="8" viewBox="0 0 10 8"><path d="M1.1,2 L4.9,5.6 L8.7,2" fill="none" stroke="#000" stroke-width="2.1"/></svg></div><div class="sel" style="left:408px"><span>5</span><svg class="chev" width="10" height="8" viewBox="0 0 10 8"><path d="M1.1,2 L4.9,5.6 L8.7,2" fill="none" stroke="#000" stroke-width="2.1"/></svg></div><div class="sel" style="left:515px"><span>10</span><svg class="chev" width="10" height="8" viewBox="0 0 10 8"><path d="M1.1,2 L4.9,5.6 L8.7,2" fill="none" stroke="#000" stroke-width="2.1"/></svg></div></div>
<div class="row" style="top:478px;background:#ffffff"><div class="nm" style="transform:scaleX(0.9032)">JSON_RPC</div><div class="sel" style="left:165px"><span>5</span><svg class="chev" width="10" height="8" viewBox="0 0 10 8"><path d="M1.1,2 L4.9,5.6 L8.7,2" fill="none" stroke="#000" stroke-width="2.1"/></svg></div><div class="sel" style="left:288px"><span>10</span><svg class="chev" width="10" height="8" viewBox="0 0 10 8"><path d="M1.1,2 L4.9,5.6 L8.7,2" fill="none" stroke="#000" stroke-width="2.1"/></svg></div><div class="sel" style="left:408px"><span>5</span><svg class="chev" width="10" height="8" viewBox="0 0 10 8"><path d="M1.1,2 L4.9,5.6 L8.7,2" fill="none" stroke="#000" stroke-width="2.1"/></svg></div><div class="sel" style="left:515px"><span>10</span><svg class="chev" width="10" height="8" viewBox="0 0 10 8"><path d="M1.1,2 L4.9,5.6 L8.7,2" fill="none" stroke="#000" stroke-width="2.1"/></svg></div></div>
<div class="row" style="top:499px;background:#f6f6f6"><div class="nm" style="transform:scaleX(0.9423)">JSON_RPC_Notification</div><div class="sel" style="left:165px"><span>5</span><svg class="chev" width="10" height="8" viewBox="0 0 10 8"><path d="M1.1,2 L4.9,5.6 L8.7,2" fill="none" stroke="#000" stroke-width="2.1"/></svg></div><div class="sel" style="left:288px"><span>10</span><svg class="chev" width="10" height="8" viewBox="0 0 10 8"><path d="M1.1,2 L4.9,5.6 L8.7,2" fill="none" stroke="#000" stroke-width="2.1"/></svg></div><div class="sel" style="left:408px"><span>5</span><svg class="chev" width="10" height="8" viewBox="0 0 10 8"><path d="M1.1,2 L4.9,5.6 L8.7,2" fill="none" stroke="#000" stroke-width="2.1"/></svg></div><div class="sel" style="left:515px"><span>10</span><svg class="chev" width="10" height="8" viewBox="0 0 10 8"><path d="M1.1,2 L4.9,5.6 L8.7,2" fill="none" stroke="#000" stroke-width="2.1"/></svg></div></div>
<div class="row" style="top:520px;background:#ffffff"><div class="nm" style="transform:scaleX(1.0304)">kron</div><div class="sel" style="left:165px"><span>5</span><svg class="chev" width="10" height="8" viewBox="0 0 10 8"><path d="M1.1,2 L4.9,5.6 L8.7,2" fill="none" stroke="#000" stroke-width="2.1"/></svg></div><div class="sel" style="left:288px"><span>10</span><svg class="chev" width="10" height="8" viewBox="0 0 10 8"><path d="M1.1,2 L4.9,5.6 L8.7,2" fill="none" stroke="#000" stroke-width="2.1"/></svg></div><div class="sel" style="left:408px"><span>5</span><svg class="chev" width="10" height="8" viewBox="0 0 10 8"><path d="M1.1,2 L4.9,5.6 L8.7,2" fill="none" stroke="#000" stroke-width="2.1"/></svg></div><div class="sel" style="left:515px"><span>10</span><svg class="chev" width="10" height="8" viewBox="0 0 10 8"><path d="M1.1,2 L4.9,5.6 L8.7,2" fill="none" stroke="#000" stroke-width="2.1"/></svg></div></div>
<div class="row" style="top:541px;background:#f6f6f6"><div class="nm" style="transform:scaleX(0.8968)">LACP</div><div class="sel" style="left:165px"><span>5</span><svg class="chev" width="10" height="8" viewBox="0 0 10 8"><path d="M1.1,2 L4.9,5.6 L8.7,2" fill="none" stroke="#000" stroke-width="2.1"/></svg></div><div class="sel" style="left:288px"><span>10</span><svg class="chev" width="10" height="8" viewBox="0 0 10 8"><path d="M1.1,2 L4.9,5.6 L8.7,2" fill="none" stroke="#000" stroke-width="2.1"/></svg></div><div class="sel" style="left:408px"><span>5</span><svg class="chev" width="10" height="8" viewBox="0 0 10 8"><path d="M1.1,2 L4.9,5.6 L8.7,2" fill="none" stroke="#000" stroke-width="2.1"/></svg></div><div class="sel" style="left:515px"><span>10</span><svg class="chev" width="10" height="8" viewBox="0 0 10 8"><path d="M1.1,2 L4.9,5.6 L8.7,2" fill="none" stroke="#000" stroke-width="2.1"/></svg></div></div>
<div class="row" style="top:562px;background:#ffffff"><div class="nm" style="transform:scaleX(0.9483)">LLDP</div><div class="sel" style="left:165px"><span>5</span><svg class="chev" width="10" height="8" viewBox="0 0 10 8"><path d="M1.1,2 L4.9,5.6 L8.7,2" fill="none" stroke="#000" stroke-width="2.1"/></svg></div><div class="sel" style="left:288px"><span>10</span><svg class="chev" width="10" height="8" viewBox="0 0 10 8"><path d="M1.1,2 L4.9,5.6 L8.7,2" fill="none" stroke="#000" stroke-width="2.1"/></svg></div><div class="sel" style="left:408px"><span>5</span><svg class="chev" width="10" height="8" viewBox="0 0 10 8"><path d="M1.1,2 L4.9,5.6 L8.7,2" fill="none" stroke="#000" stroke-width="2.1"/></svg></div><div class="sel" style="left:515px"><span>10</span><svg class="chev" width="10" height="8" viewBox="0 0 10 8"><path d="M1.1,2 L4.9,5.6 L8.7,2" fill="none" stroke="#000" stroke-width="2.1"/></svg></div></div>
<div class="row" style="top:583px;background:#f6f6f6"><div class="nm" style="transform:scaleX(0.9831)">Loop_Protect</div><div class="sel" style="left:165px"><span>5</span><svg class="chev" width="10" height="8" viewBox="0 0 10 8"><path d="M1.1,2 L4.9,5.6 L8.7,2" fill="none" stroke="#000" stroke-width="2.1"/></svg></div><div class="sel" style="left:288px"><span>10</span><svg class="chev" width="10" height="8" viewBox="0 0 10 8"><path d="M1.1,2 L4.9,5.6 L8.7,2" fill="none" stroke="#000" stroke-width="2.1"/></svg></div><div class="sel" style="left:408px"><span>5</span><svg class="chev" width="10" height="8" viewBox="0 0 10 8"><path d="M1.1,2 L4.9,5.6 L8.7,2" fill="none" stroke="#000" stroke-width="2.1"/></svg></div><div class="sel" style="left:515px"><span>10</span><svg class="chev" width="10" height="8" viewBox="0 0 10 8"><path d="M1.1,2 L4.9,5.6 L8.7,2" fill="none" stroke="#000" stroke-width="2.1"/></svg></div></div>
<div class="row" style="top:604px;background:#ffffff"><div class="nm" style="transform:scaleX(0.9371)">MAC_Table</div><div class="sel" style="left:165px"><span>5</span><svg class="chev" width="10" height="8" viewBox="0 0 10 8"><path d="M1.1,2 L4.9,5.6 L8.7,2" fill="none" stroke="#000" stroke-width="2.1"/></svg></div><div class="sel" style="left:288px"><span>10</span><svg class="chev" width="10" height="8" viewBox="0 0 10 8"><path d="M1.1,2 L4.9,5.6 L8.7,2" fill="none" stroke="#000" stroke-width="2.1"/></svg></div><div class="sel" style="left:408px"><span>5</span><svg class="chev" width="10" height="8" viewBox="0 0 10 8"><path d="M1.1,2 L4.9,5.6 L8.7,2" fill="none" stroke="#000" stroke-width="2.1"/></svg></div><div class="sel" style="left:515px"><span>10</span><svg class="chev" width="10" height="8" viewBox="0 0 10 8"><path d="M1.1,2 L4.9,5.6 L8.7,2" fill="none" stroke="#000" stroke-width="2.1"/></svg></div></div>
<div class="row" style="top:625px;background:#f6f6f6"><div class="nm" style="transform:scaleX(0.9838)">Maintenance</div><div class="sel" style="left:165px"><span>15</span><svg class="chev" width="10" height="8" viewBox="0 0 10 8"><path d="M1.1,2 L4.9,5.6 L8.7,2" fill="none" stroke="#000" stroke-width="2.1"/></svg></div><div class="sel" style="left:288px"><span>15</span><svg class="chev" width="10" height="8" viewBox="0 0 10 8"><path d="M1.1,2 L4.9,5.6 L8.7,2" fill="none" stroke="#000" stroke-width="2.1"/></svg></div><div class="sel" style="left:408px"><span>15</span><svg class="chev" width="10" height="8" viewBox="0 0 10 8"><path d="M1.1,2 L4.9,5.6 L8.7,2" fill="none" stroke="#000" stroke-width="2.1"/></svg></div><div class="sel" style="left:515px"><span>15</span><svg class="chev" width="10" height="8" viewBox="0 0 10 8"><path d="M1.1,2 L4.9,5.6 L8.7,2" fill="none" stroke="#000" stroke-width="2.1"/></svg></div></div>
<div class="row" style="top:646px;background:#ffffff"><div class="nm" style="transform:scaleX(0.928)">MEP</div><div class="sel" style="left:165px"><span>5</span><svg class="chev" width="10" height="8" viewBox="0 0 10 8"><path d="M1.1,2 L4.9,5.6 L8.7,2" fill="none" stroke="#000" stroke-width="2.1"/></svg></div><div class="sel" style="left:288px"><span>10</span><svg class="chev" width="10" height="8" viewBox="0 0 10 8"><path d="M1.1,2 L4.9,5.6 L8.7,2" fill="none" stroke="#000" stroke-width="2.1"/></svg></div><div class="sel" style="left:408px"><span>5</span><svg class="chev" width="10" height="8" viewBox="0 0 10 8"><path d="M1.1,2 L4.9,5.6 L8.7,2" fill="none" stroke="#000" stroke-width="2.1"/></svg></div><div class="sel" style="left:515px"><span>10</span><svg class="chev" width="10" height="8" viewBox="0 0 10 8"><path d="M1.1,2 L4.9,5.6 L8.7,2" fill="none" stroke="#000" stroke-width="2.1"/></svg></div></div>
<div class="row" style="top:667px;background:#f6f6f6"><div class="nm" style="transform:scaleX(1.0119)">modbus</div><div class="sel" style="left:165px"><span>5</span><svg class="chev" width="10" height="8" viewBox="0 0 10 8"><path d="M1.1,2 L4.9,5.6 L8.7,2" fill="none" stroke="#000" stroke-width="2.1"/></svg></div><div class="sel" style="left:288px"><span>10</span><svg class="chev" width="10" height="8" viewBox="0 0 10 8"><path d="M1.1,2 L4.9,5.6 L8.7,2" fill="none" stroke="#000" stroke-width="2.1"/></svg></div><div class="sel" style="left:408px"><span>5</span><svg class="chev" width="10" height="8" viewBox="0 0 10 8"><path d="M1.1,2 L4.9,5.6 L8.7,2" fill="none" stroke="#000" stroke-width="2.1"/></svg></div><div class="sel" style="left:515px"><span>10</span><svg class="chev" width="10" height="8" viewBox="0 0 10 8"><path d="M1.1,2 L4.9,5.6 L8.7,2" fill="none" stroke="#000" stroke-width="2.1"/></svg></div></div>
<div class="row" style="top:688px;background:#ffffff"><div class="nm" style="transform:scaleX(1.07)">mrp</div><div class="sel" style="left:165px"><span>5</span><svg class="chev" width="10" height="8" viewBox="0 0 10 8"><path d="M1.1,2 L4.9,5.6 L8.7,2" fill="none" stroke="#000" stroke-width="2.1"/></svg></div><div class="sel" style="left:288px"><span>10</span><svg class="chev" width="10" height="8" viewBox="0 0 10 8"><path d="M1.1,2 L4.9,5.6 L8.7,2" fill="none" stroke="#000" stroke-width="2.1"/></svg></div><div class="sel" style="left:408px"><span>5</span><svg class="chev" width="10" height="8" viewBox="0 0 10 8"><path d="M1.1,2 L4.9,5.6 L8.7,2" fill="none" stroke="#000" stroke-width="2.1"/></svg></div><div class="sel" style="left:515px"><span>10</span><svg class="chev" width="10" height="8" viewBox="0 0 10 8"><path d="M1.1,2 L4.9,5.6 L8.7,2" fill="none" stroke="#000" stroke-width="2.1"/></svg></div></div>
<div class="row" style="top:709px;background:#f6f6f6"><div class="nm" style="transform:scaleX(0.9385)">MVR</div><div class="sel" style="left:165px"><span>5</span><svg class="chev" width="10" height="8" viewBox="0 0 10 8"><path d="M1.1,2 L4.9,5.6 L8.7,2" fill="none" stroke="#000" stroke-width="2.1"/></svg></div><div class="sel" style="left:288px"><span>10</span><svg class="chev" width="10" height="8" viewBox="0 0 10 8"><path d="M1.1,2 L4.9,5.6 L8.7,2" fill="none" stroke="#000" stroke-width="2.1"/></svg></div><div class="sel" style="left:408px"><span>5</span><svg class="chev" width="10" height="8" viewBox="0 0 10 8"><path d="M1.1,2 L4.9,5.6 L8.7,2" fill="none" stroke="#000" stroke-width="2.1"/></svg></div><div class="sel" style="left:515px"><span>10</span><svg class="chev" width="10" height="8" viewBox="0 0 10 8"><path d="M1.1,2 L4.9,5.6 L8.7,2" fill="none" stroke="#000" stroke-width="2.1"/></svg></div></div>
<div id="red"></div>
</body></html>
